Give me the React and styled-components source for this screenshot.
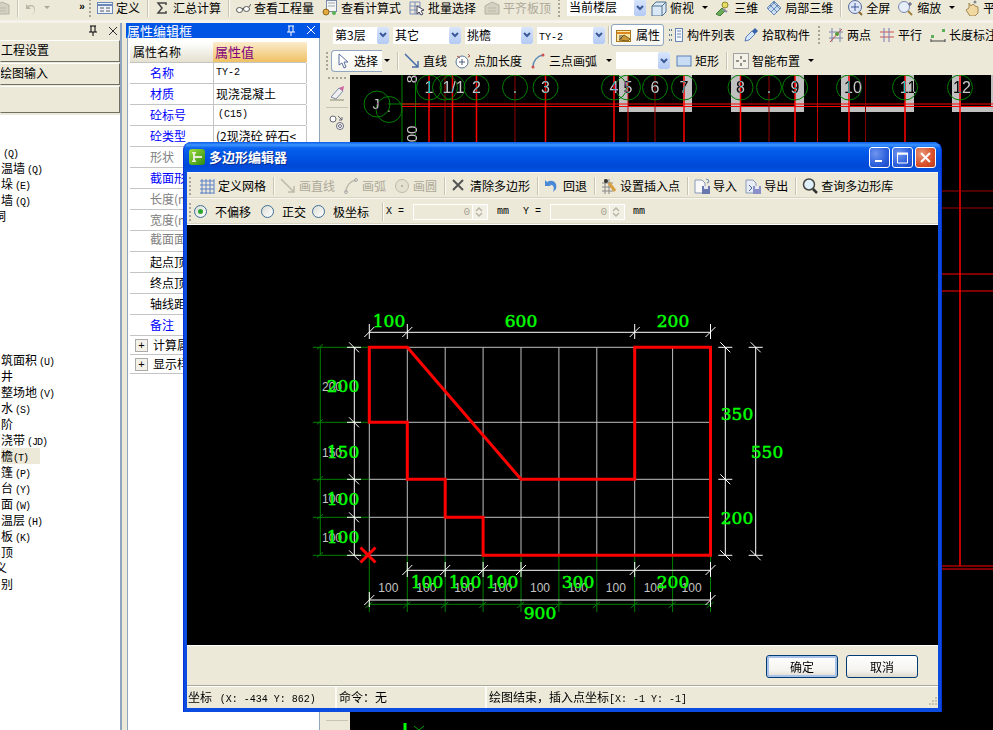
import React from "react";
import styled, { createGlobalStyle } from "styled-components";

const CJK = `"Noto Sans CJK SC", "Liberation Sans", sans-serif`;
const MONO = `"Liberation Mono", "Noto Sans CJK SC", monospace`;
const BEIGE = "#ece9d8";

const GlobalStyle = createGlobalStyle`
  html, body { margin: 0; padding: 0; background: #000; overflow: hidden; }
  body { font: 12px/16px ${CJK}; color: #000; }
`;

/* ---------- icons ---------- */
const SvgBase = styled.svg`
  flex: none;
  display: block;
`;

const Svg = ({ w = 16, h = 16, children }) => (
  <SvgBase width={w} height={h} viewBox={`0 0 ${w} ${h}`}>
    {children}
  </SvgBase>
);

const icons = {
  table: <><rect x=".5" y="2.5" width="15" height="11" fill="#eef3fb" stroke="#6a87b8" /><path d="M1 5h14" stroke="#6a87b8" strokeWidth="2" /><path d="M3 8h4M3 11h4M9 8h4M9 11h4" stroke="#555" /></>,
  sigma: <path d="M4 3h8v2M12 3H4l4 5-4 5h8v-2" fill="none" stroke="#444" strokeWidth="1.5" />,
  glasses: <><ellipse cx="4.5" cy="10" rx="3" ry="2.5" fill="#fff" stroke="#555" /><ellipse cx="11.5" cy="9" rx="3" ry="2.5" fill="#fff" stroke="#555" /><path d="M7 9l2-1M14 7l2-3" stroke="#555" /></>,
  calc: <><rect x="4.5" y=".5" width="10" height="11" fill="#f6f6f6" stroke="#7a8aa8" /><path d="M6 3h7M6 6h7" stroke="#9aa" /><circle cx="4" cy="12" r="3" fill="#e3a93a" stroke="#8a6a20" /><circle cx="12" cy="13" r="2" fill="#58b058" /></>,
  batch: <><path d="M1 2h10M1 6h10M1 10h10M1 14h10M1 2v12M6 2v12M11 2v12" fill="none" stroke="#7a8fb8" /><path d="M8 6l7 4-3 1 2 3-2 1-2-3-2 2z" fill="#fff" stroke="#445" /></>,
  align: <><path d="M1 6l7-4 7 3v9H1z" fill="#d4d1c2" stroke="#b5b2a2" /><path d="M4 8h8M4 11h8" stroke="#bdb9a8" /></>,
  cube: <><path d="M1 6l4-4h10v10l-4 4H1z" fill="#dbe9f6" stroke="#50708c" /><path d="M1 6h10v10M11 6l4-4" fill="none" stroke="#50708c" /></>,
  three: <><circle cx="10" cy="5" r="3" fill="#e8dc60" stroke="#8a8a30" /><path d="M1 14l6-6 3 3-5 5z" fill="#6cab5a" stroke="#3f7a3a" /><path d="M8 9l4 3" stroke="#8a8aa0" strokeWidth="2" /></>,
  part3d: <><path d="M1 8l7-7 7 7-7 7z" fill="#c9dcf2" stroke="#6a8ab8" /><path d="M4 5l7 7M7 2l7 7M12 5l-7 7M9 2L2 9" stroke="#6a8ab8" /></>,
  zoomAll: <><circle cx="8" cy="7" r="6.5" fill="#dce6f6" stroke="#5a6c96" /><path d="M8 3v8M4 7h8" stroke="#3a5a9a" /><path d="M12 12l3 3" stroke="#8a6a30" strokeWidth="2" /></>,
  zoomDrag: <><circle cx="6" cy="7" r="5.5" fill="#e6eefa" stroke="#7a8ab0" /><path d="M10 11l4 4" stroke="#a08040" strokeWidth="2" /><path d="M12 2v4M10 4h4" stroke="#557" /></>,
  hand: <><path d="M2 10l3-2V3l2 3 2-2 2 2 3 1v6l-3 3H6z" fill="#f0d8a0" stroke="#a08850" /><circle cx="11" cy="2" r="1.5" fill="#888" /></>,
  attr: <><rect x=".5" y="3.5" width="14" height="11" fill="#fbe8a8" stroke="#a87820" /><path d="M1 6h13" stroke="#e08820" strokeWidth="2" /><path d="M3 13l5-5 6 4-2 2z" fill="#c89838" stroke="#7a5a18" /><path d="M3 9h4M3 11h3" stroke="#444" /></>,
  list: <><path d="M1 3h3M1 8h3M1 13h3" stroke="#5a7a9a" strokeWidth="2" strokeDasharray="1 1" /><rect x="7.5" y="1.5" width="7" height="13" fill="#f4f7fb" stroke="#6a87b8" /><path d="M9 4h4M9 7h4M9 10h4" stroke="#6a87b8" /></>,
  dropper: <><path d="M2 14l1-4 6-6 3 3-6 6z" fill="#d4e6fa" stroke="#5a7ab8" /><path d="M9 4l3-3 3 3-3 3z" fill="#3a62aa" /></>,
  twoPt: <><path d="M4 1v14M12 1v14M1 5h14M1 11h14" stroke="#7a8ab0" /><path d="M2 15L14 2" stroke="#c05050" /><circle cx="9" cy="7" r="2" fill="#5a9a3a" /></>,
  parallel: <><path d="M1 5h14M1 10h14" stroke="#d05050" /><path d="M5 1v14M10 1v14" stroke="#7a7ab8" /></>,
  dim: <><rect x="1" y="8" width="3" height="3" fill="#5ab05a" /><rect x="12" y="2" width="3" height="3" fill="#5ab05a" /><path d="M1 12v3M15 12v3M1 14h14" stroke="#444" /></>,
  cursor: <path d="M3 1l0 11 3-2 2 5 2-1-2-5h4z" fill="#fff" stroke="#5a6ea0" />,
  line: <path d="M1 1l13 13M14 8v6H8" fill="none" stroke="#4a6ea8" strokeWidth="1.5" />,
  pointLen: <><circle cx="7" cy="9" r="6" fill="#fff" stroke="#5a7a9a" /><path d="M7 6v6M4 9h6" stroke="#4a5a7a" /><path d="M2 3l3 2M13 1l2 2-2 1" fill="none" stroke="#b05040" /></>,
  arc: <><path d="M3 14C3 8 7 3 13 2" fill="none" stroke="#5a8ab8" strokeWidth="1.5" /><circle cx="3" cy="14" r="1.5" fill="#d05050" /><circle cx="13" cy="2" r="1.5" fill="#d05050" /></>,
  rect: <rect x="1" y="3" width="14" height="10" fill="#c8dcf4" stroke="#5a80b8" />,
  smart: <><rect x=".5" y=".5" width="15" height="15" fill="#f4f2e6" stroke="#556" strokeDasharray="1 1" /><path d="M8 3v3M8 10v3M3 8h3M10 8h3" stroke="#333" /></>,
  eraser: <><path d="M2 12l8-9 4 3-7 8z" fill="#f0f0f0" stroke="#7a8aa8" /><path d="M10 3l4 3 1-5z" fill="#d060a0" /><path d="M1 15h14" stroke="#8a8a70" /></>,
  circles: <><circle cx="4" cy="5" r="3" fill="#fff" stroke="#667" /><circle cx="11" cy="12" r="3.5" fill="#fff" stroke="#667" /><circle cx="11" cy="12" r="1.5" fill="none" stroke="#667" /><path d="M9 2l4 4M13 3v3h-3" fill="none" stroke="#667" /></>,
  grid: <path d="M1 3h14M1 7h14M1 11h14M1 15h14M3 1v15M7 1v15M11 1v15M15 1v15" stroke="#5b80c8" />,
  grayLine: <path d="M1 1l13 13M14 8v6H8" fill="none" stroke="#bdbaab" strokeWidth="1.5" />,
  grayArc: <><path d="M3 14C3 8 7 3 13 2" fill="none" stroke="#bdbaab" strokeWidth="1.5" /><circle cx="3" cy="14" r="1.5" fill="none" stroke="#aaa" /><circle cx="13" cy="2" r="1.5" fill="none" stroke="#aaa" /></>,
  grayCircle: <><circle cx="8" cy="8" r="6.5" fill="#e4e1d0" stroke="#bdbaab" /><circle cx="8" cy="8" r="1" fill="#a8a596" /></>,
  clear: <path d="M2 2l10 10M12 2L2 12" stroke="#555" strokeWidth="2" />,
  undo: <><path d="M3 4c5-3 11 0 9 7l-3 3c2-5 0-8-4-7z" fill="#4a88d8" /><path d="M1 2v6h6z" fill="#4a88d8" /></>,
  insert: <><path d="M1 5h11M1 9h11M1 13h11M4 1v15M8 1v15" stroke="#888" /><path d="M8 5l6 8" stroke="#d8a040" strokeWidth="3" /><circle cx="5" cy="3" r="2" fill="#333" /></>,
  imp: <><path d="M1 2h7l3 3v10H1z" fill="#f8f8f8" stroke="#8a9ab8" /><rect x="8" y="8" width="8" height="8" fill="#6a78b0" /><rect x="10" y="8" width="4" height="3" fill="#e8e8f0" /><path d="M12 1a3 3 0 0 1 3 3l-2 1" fill="none" stroke="#6a88b0" /></>,
  exp: <><path d="M1 2h7l3 3v10H1z" fill="#e8ecf4" stroke="#8a9ab8" /><rect x="8" y="8" width="8" height="8" fill="#8a90c8" /><rect x="10" y="8" width="4" height="3" fill="#e8e8f0" /><path d="M4 7l3 3-3 3" fill="none" stroke="#4a6a98" /></>,
  search: <><circle cx="7" cy="6.5" r="5.5" fill="#dff0fa" stroke="#444" strokeWidth="1.5" /><path d="M11 11l4 4" stroke="#333" strokeWidth="2.5" /></>,
};

const Icon = ({ name }) => <Svg>{icons[name]}</Svg>;

/* ---------- shared bar parts ---------- */
const Page = styled.div`
  position: relative;
  width: 993px;
  height: 730px;
  overflow: hidden;
  display: flex;
  flex-direction: column;
  background: ${BEIGE};
`;

const Bar = styled.div`
  display: flex;
  align-items: center;
  flex: none;
  height: ${(p) => p.$h || 24}px;
  padding-left: ${(p) => p.$pl || 0}px;
  padding-bottom: ${(p) => p.$pb || 0}px;
  background: ${BEIGE};
  box-sizing: border-box;
  white-space: nowrap;
`;

const TopBar = styled(Bar)`
  border-bottom: 1px solid #f6f4ea;
  box-shadow: inset 0 -2px 0 #f4f2e8;
`;

const ToolItem = styled.div`
  display: flex;
  align-items: center;
  flex: none;
  gap: 3px;
  padding: 0 4px;
  margin-left: ${(p) => p.$ml || 0}px;
  color: ${(p) => (p.$off ? "#aca899" : "#000")};
`;

const Tool = ({ icon, label, off }) => (
  <ToolItem $off={off}>
    <Icon name={icon} />
    <span>{label}</span>
  </ToolItem>
);

const Sep = styled.i`
  flex: none;
  width: 1px;
  height: 18px;
  margin: 0 ${(p) => p.$mr ?? 2}px 0 ${(p) => p.$ml ?? 3}px;
  background: #c8c4b0;
  box-shadow: 1px 0 0 #fbfaf4;
`;

const Grip = styled.i`
  flex: none;
  width: 2px;
  height: 18px;
  margin: 0 ${(p) => p.$mr ?? 4}px 0 ${(p) => p.$ml ?? 3}px;
  background: repeating-linear-gradient(to bottom, #a8a594 0 2px, transparent 2px 4px);
`;

const Caret = styled.i`
  flex: none;
  width: 0;
  height: 0;
  margin: 0 ${(p) => p.$mr ?? 3}px 0 ${(p) => p.$ml ?? 4}px;
  border: 3px solid transparent;
  border-top: 3px solid ${(p) => p.$c || "#000"};
  border-bottom: 0;
`;

const ComboBox = styled.div`
  display: flex;
  flex: none;
  justify-content: space-between;
  width: ${(p) => p.$w}px;
  height: 17px;
  margin-right: ${(p) => p.$mr ?? 4}px;
  background: #fff;
  line-height: 16px;
  padding-left: 2px;
  box-sizing: border-box;
`;

const ComboArrow = styled.div`
  display: flex;
  align-items: center;
  justify-content: center;
  width: 12px;
  background: linear-gradient(to bottom, #d8e5fb, #b4caf5);
  border-radius: 2px;
`;

const Combo = ({ w, mr, children }) => (
  <ComboBox $w={w} $mr={mr}>
    <span>{children}</span>
    <ComboArrow>
      <Svg w={8} h={6}>
        <path d="M1 1l3 3 3-3" fill="none" stroke="#3a5a9a" strokeWidth="2" />
      </Svg>
    </ComboArrow>
  </ComboBox>
);

const Latin = styled.span`
  font: ${(p) => (p.$bold ? "bold " : "")}10px/16px ${MONO};
  margin-left: ${(p) => p.$ml ?? 0}px;
  letter-spacing: ${(p) => p.$ls ?? 0}px;
`;

const PushButton = styled.div`
  display: flex;
  align-items: center;
  flex: none;
  gap: 4px;
  height: 22px;
  padding: 0 3px 0 4px;
  box-sizing: border-box;
  border: 1px solid #8fa5c0;
  border-radius: 3px;
  background: linear-gradient(to bottom, #fff, #f6f5ee);
`;

const SelectButton = styled(PushButton)`
  width: 51px;
  gap: 2px;
  padding-left: 4px;
  border-right: 0;
  border-radius: 4px 0 0 4px;
`;

/* ---------- left panel ---------- */
const Main = styled.div`
  display: flex;
  flex: 1;
  min-height: 0;
`;

const LeftPanel = styled.div`
  display: flex;
  flex-direction: column;
  flex: none;
  width: 122px;
  box-sizing: border-box;
  border-right: 2px solid #8fa5bf;
`;

const DockHead = styled.div`
  display: flex;
  align-items: center;
  justify-content: flex-end;
  flex: none;
  gap: 9px;
  height: 15px;
  padding-right: 2px;
  margin-bottom: 2px;
  background: ${BEIGE};
`;

const PropHead = styled(DockHead)`
  justify-content: space-between;
  padding-left: 1px;
  color: #fff;
  font-size: 13px;
  background: #0055e5;
`;

const HeadIcons = styled.span`
  display: flex;
  gap: 9px;
  padding-right: 2px;
`;

const NavButton = styled.div`
  flex: none;
  height: ${(p) => p.$h}px;
  line-height: ${(p) => p.$h - 5}px;
  margin-bottom: 1px;
  box-sizing: border-box;
  border: 1px solid;
  border-color: #fff #716f64 #716f64 transparent;
  background: ${BEIGE};
  text-indent: ${(p) => p.$indent || 0}px;
  overflow: hidden;
`;

const TreeList = styled.div`
  flex: 1;
  padding-top: 29px;
  margin-top: 1px;
  background: #fff;
`;

const TreeRow = styled.div`
  height: 16px;
  line-height: 16px;
  padding-left: 1px;
  white-space: nowrap;
  overflow: hidden;
`;

const TreeText = styled.span`
  display: inline-block;
  padding-right: 12px;
  margin-left: ${(p) => p.$shift || 0}px;
  background: ${(p) => (p.$active ? BEIGE : "transparent")};
`;

const Splitter = styled.div`
  flex: none;
  width: 4px;
  background: ${BEIGE};
`;

/* ---------- property panel ---------- */
const PropPanel = styled.div`
  display: flex;
  flex-direction: column;
  flex: none;
  width: 194px;
`;

const PropBody = styled.div`
  flex: 1;
  margin: -2px 0 0 1px;
  padding: 4px 13px 0 2px;
  background: #fff;
  border: solid #8fa5bf;
  border-width: 0 1px 0 1px;
`;

const PropRow = styled.div`
  display: grid;
  grid-template-columns: 83px 94px;
  height: ${(p) => p.$h || 21}px;
  box-sizing: border-box;
  border-bottom: 1px solid #c4c4c4;
`;

const NameCell = styled.div`
  display: flex;
  align-items: ${(p) => (p.$top ? "flex-start" : "center")};
  gap: 5px;
  padding-left: ${(p) => (p.$plain ? 3 : 20)}px;
  color: ${(p) => p.$c || "#000"};
  overflow: hidden;
  white-space: nowrap;
`;

const ValueCell = styled.div`
  display: flex;
  align-items: center;
  padding-left: 2px;
  border: solid #c4c4c4;
  border-width: 0 1px 0 1px;
  overflow: hidden;
  white-space: nowrap;
`;

const HeadName = styled(NameCell)`
  background: linear-gradient(to bottom, #fff, #e4e0d0);
`;

const HeadValue = styled(ValueCell)`
  color: #800080;
  font-size: 13px;
  border: 0;
  background: linear-gradient(to bottom, #fbeccd, #f0c164);
`;

const PlusBox = styled.i`
  display: flex;
  align-items: center;
  justify-content: center;
  flex: none;
  width: 11px;
  height: 11px;
  margin-left: 2px;
  border: 1px solid #aaa;
  background: #f4f2e8;
  font: 11px/11px "Liberation Sans", sans-serif;
  color: #000;
`;

const props = [
  ["名称", "#0000ff", <Latin>TY-2</Latin>],
  ["材质", "#0000ff", "现浇混凝土"],
  ["砼标号", "#0000ff", <Latin $ml={2}>(C15)</Latin>],
  ["砼类型", "#0000ff", "(2现浇砼 碎石<"],
  ["形状", "#808080", ""],
  ["截面形状", "#0000ff", ""],
  ["长度(m)", "#808080", ""],
  ["宽度(m)", "#808080", ""],
  ["截面面积", "#808080", ""],
  ["起点顶标高", "#000", ""],
  ["终点顶标高", "#000", ""],
  ["轴线距边线", "#000", ""],
  ["备注", "#0000ff", ""],
];

/* ---------- right area ---------- */
const RightArea = styled.div`
  display: flex;
  flex-direction: column;
  flex: 1;
  min-width: 0;
  margin-left: 3px;
`;

const SideBody = styled.div`
  display: flex;
  flex: 1;
  min-height: 0;
  margin-top: 1px;
`;

const VBar = styled.div`
  display: flex;
  flex-direction: column;
  align-items: center;
  flex: none;
  gap: 6px;
  width: 27px;
  padding-top: 2px;
  background: ${BEIGE};
  box-sizing: border-box;
`;

const VGrip = styled.i`
  flex: none;
  width: 18px;
  height: 2px;
  background: repeating-linear-gradient(to right, #a8a594 0 2px, transparent 2px 4px);
`;

const VSep = styled.i`
  flex: none;
  width: 22px;
  height: 1px;
  background: #c8c4b0;
`;

const VBottom = styled.div`
  display: flex;
  flex-direction: column;
  align-items: center;
  gap: 4px;
  margin-top: auto;
  height: 10px;
`;

const CadView = styled.div`
  flex: 1;
  background: #000;
  min-width: 0;
  svg { display: block; }
`;

/* labels in the plan are XOR-drawn: dark on grey blocks, cyan on red axes */
const XorText = styled.g`
  mix-blend-mode: difference;
`;

/* ---------- dialog ---------- */
const Dialog = styled.div`
  position: absolute;
  left: 184px;
  top: 142px;
  width: 757px;
  height: 570px;
  display: flex;
  flex-direction: column;
  box-sizing: border-box;
  border: solid #0a4be0;
  border-width: 0 3px 4px 3px;
  border-radius: 8px 8px 0 0;
  background: ${BEIGE};
  box-shadow: -1px 0 0 #0831d9, 1px 0 0 #0831d9;
`;

const TitleBar = styled.div`
  display: flex;
  align-items: center;
  flex: none;
  gap: 4px;
  height: 30px;
  margin: 0 -3px;
  padding: 0 5px 0 5px;
  box-sizing: border-box;
  border-radius: 8px 8px 0 0;
  background: linear-gradient(
    to bottom,
    #0a5be8 0,
    #3d95ff 3px,
    #0a62ee 6px,
    #0055e5 14px,
    #0049d8 24px,
    #0451e0 30px
  );
`;

const TitleText = styled.div`
  flex: 1;
  font: bold 13px/16px ${CJK};
  color: #fff;
  text-shadow: 1px 1px 0 #0a2f90;
`;

const CapButton = styled.div`
  display: flex;
  align-items: center;
  justify-content: center;
  flex: none;
  width: 21px;
  height: 21px;
  box-sizing: border-box;
  border: 1px solid #fff;
  border-radius: 3px;
  background: ${(p) =>
    p.$close
      ? "radial-gradient(circle at 30% 30%, #e89878, #d84f28 60%, #c03a18)"
      : "radial-gradient(circle at 30% 30%, #6f96ee, #2c5fdc 60%, #1c46c0)"};
`;

const CapGroup = styled.div`
  display: flex;
  gap: 2px;
`;

const DialogBar = styled(Bar)`
  height: 26px;
  padding-left: 2px;
  box-shadow: inset 0 -1px 0 #d8d4c2;
  border-top: 1px solid #f8f7ef;
`;

const RadioItem = styled.label`
  display: flex;
  align-items: center;
  flex: none;
  gap: 8px;
  margin-right: ${(p) => p.$mr}px;
`;

const RadioDot = styled.i`
  display: flex;
  align-items: center;
  justify-content: center;
  flex: none;
  width: 13px;
  height: 13px;
  box-sizing: border-box;
  border: 1px solid #3f6f98;
  border-radius: 50%;
  background: linear-gradient(135deg, #dcdcd4, #fff);
  &::after {
    content: "";
    display: ${(p) => (p.$on ? "block" : "none")};
    width: 5px;
    height: 5px;
    border-radius: 50%;
    background: #2fa62f;
  }
`;

const Radio = ({ on, label, mr = 10 }) => (
  <RadioItem $mr={mr}>
    <RadioDot $on={on} />
    <span>{label}</span>
  </RadioItem>
);

const FieldLabel = styled.span`
  flex: none;
  font: 10px/16px ${MONO};
  width: ${(p) => p.$w}px;
`;

const Field = styled.div`
  display: flex;
  align-items: center;
  justify-content: flex-end;
  flex: none;
  width: 75px;
  height: 16px;
  margin-right: ${(p) => p.$mr}px;
  box-sizing: border-box;
  border: 1px solid #fff;
  color: #a8a596;
  font: 11px/14px "Liberation Mono", monospace;
`;

const Spin = styled.i`
  display: block;
  flex: none;
  width: 14px;
  height: 14px;
  margin-left: 2px;
  background: #f2f0e4;
  border-left: 1px solid #fff;
`;

const NumField = ({ mr }) => (
  <Field $mr={mr}>
    0
    <Spin>
      <Svg w={13} h={14}>
        <path d="M3 6l3-3 3 3M3 8l3 3 3-3" fill="none" stroke="#b8b5a6" strokeWidth="1.5" />
      </Svg>
    </Spin>
  </Field>
);

const DrawArea = styled.div`
  flex: none;
  height: 420px;
  background: #000;
  border-top: 1px solid #fff;
  border-bottom: 1px solid #fff;
  svg { display: block; }
`;

const ButtonRow = styled.div`
  display: flex;
  justify-content: flex-end;
  gap: 8px;
  flex: none;
  height: 40px;
  padding: 9px 20px 0 0;
  box-sizing: border-box;
  border-bottom: 1px solid #aca899;
`;

const DlgButton = styled.div`
  flex: none;
  width: 72px;
  height: 23px;
  line-height: 21px;
  text-align: center;
  box-sizing: border-box;
  border: 1px solid #003c74;
  border-radius: 3px;
  background: linear-gradient(to bottom, #fff, #f4f3ee 70%, #dcd8cc);
  box-shadow: ${(p) => (p.$def ? "inset 0 0 0 2px #a9c2ea" : "none")};
`;

const StatusBar = styled.div`
  position: relative;
  display: flex;
  flex: 1;
  border-top: 1px solid #fff;
  line-height: 19px;
`;

const StatusCell = styled.div`
  flex: none;
  width: ${(p) => p.$w}px;
  padding-left: ${(p) => p.$pl ?? 2}px;
  box-sizing: border-box;
  border-right: ${(p) => (p.$end ? "0" : "2px solid #fbfaf4")};
  white-space: nowrap;
`;

const ResizeGrip = styled.div`
  position: absolute;
  right: 0;
  bottom: 1px;
`;

/* ---------- background plan ---------- */
const axes = [
  ["1", 429, "#ff0000"], ["", 445, "#a00000"], ["1/1", 452.5, "#ff0000"], ["2", 476.5, "#ff0000"],
  [".", 515, "#900000"], ["3", 545.5, "#ff0000"], ["4", 614, "#ff0000"], ["5", 628, "#d00000"],
  ["6", 655, "#a00000"], ["7", 684, "#ff0000"], ["8", 740.5, "#ff0000"], [".", 769, "#900000"],
  ["9", 795, "#ff0000"], ["10", 849, "#ff0000"], ["11", 905, "#ff0000"], ["12", 960, "#ff0000"],
];
const plainLines = [[817.5, "#c00000"], [865.5, "#800000"]];

const labelShift = { "1/1": 1, 10: 4, 11: 3, 12: 2 };

const blocks = [
  [619, 692],
  [731, 804],
  [841, 914],
  [952, 1000],
];

const BackPlan = () => (
  <svg width="643" height="656" viewBox="350 74 643 656">
    {blocks.map(([a, b]) => (
      <path key={a} d={`M${a} 74h9v32h${b - a - 18}V74h9v37h-${b - a}z`} fill="#c0c0c0" />
    ))}
    <path d="M402 74v68M415.5 74v68M388 103h32" stroke="#008000" fill="none" />
    <path d="M402 103h591M402 105.5h591" stroke="#ff0000" fill="none" />
    {axes.map(([, x, c]) => (
      <path key={x} d={`M${x} 74V565`} stroke={c} strokeWidth={c === "#ff0000" ? 1.5 : 1} />
    ))}
    {plainLines.map(([x, c]) => (
      <path key={x} d={`M${x} 74V142`} stroke={c} />
    ))}
    <g fill="none" stroke="#008000">
      {axes.map(([, x]) => <circle key={x} cx={x} cy="86.5" r="12.5" />)}
      <circle cx="377" cy="103" r="13" />
      <circle cx="389" cy="108.5" r="13" />
    </g>
    <XorText fill="#c8c8c8" fontFamily="Liberation Sans, sans-serif" fontSize="16" textAnchor="middle">
      {axes.map(([l, x]) => (l ? <text key={x} x={x + (labelShift[l] || 0)} y="92">{l}</text> : null))}
      <text x="376" y="108" fontSize="14">J</text>
      <text x="389" y="111" fontSize="12">.</text>
      <text transform="translate(417 78) rotate(-90)" fontSize="15">8</text>
      <text transform="translate(417 133) rotate(-90)" fontSize="15">00</text>
    </XorText>
    <path d="M941 190h52M941 207h52" stroke="#a00000" />
    <path d="M941 273h52M941 290h52M941 565h52M941 568h52" stroke="#ff0000" />
    <path d="M405 722v8" stroke="#00ff00" strokeWidth="3" />
    <path d="M414 725l5 4 5-4" stroke="#00a000" fill="none" />
  </svg>
);

/* ---------- polygon drawing ---------- */
const gx = [369.3, 407.3, 445.2, 483.1, 521, 558.9, 596.8, 634.7, 672.6, 710.5];
const gy = [347.3, 422.3, 479.3, 517.3, 555.3];

const poly =
  "369.3,347.3 407.3,347.3 521,479.3 634.7,479.3 634.7,347.3 710.5,347.3 710.5,555.3 483.1,555.3 483.1,517.3 445.2,517.3 445.2,479.3 407.3,479.3 407.3,422.3 369.3,422.3";

const bigLabels = [
  ["100", 389, 327], ["600", 521, 327], ["200", 673, 327],
  ["350", 737, 420], ["200", 737, 524], ["550", 767, 458],
  ["200", 343, 392], ["150", 343, 458], ["100", 343, 505], ["100", 343, 543],
  ["100", 427, 588], ["100", 465, 588], ["100", 502, 588], ["300", 578, 588], ["200", 673, 588],
  ["900", 540, 619],
];

const smallLabels = [
  ["200", 332, 391], ["150", 332, 457], ["100", 332, 503], ["100", 332, 542],
  ...gx.slice(0, 9).map((x) => ["100", x + 19, 592]),
];

const tickH = (x, y) => `M${x} ${y - 8}V${y + 7}M${x - 5} ${y + 5}L${x + 5} ${y - 5}`;
const tickV = (x, y, half = 7) => `M${x - half} ${y}H${x + half}M${x - 5} ${y - 5}L${x + 5} ${y + 5}`;

const PolygonDrawing = () => (
  <svg width="751" height="420" viewBox="187 225 751 420">
    <g stroke="#c0c0c0" fill="none">
      {gx.map((x) => <path key={x} d={`M${x} ${gy[0]}V${gy[4]}`} />)}
      {gy.map((y) => <path key={y} d={`M${gx[0]} ${y}H${gx[9]}`} />)}
    </g>
    <g stroke="#008000" fill="none">
      <path d="M320.3 347.3V555.3M369.3 604.3H710.5" />
      {gy.map((y) => <path key={y} d={`M313 ${y}H369M317 ${y + 2}l6 -5`} />)}
      {gx.map((x) => <path key={x} d={`M${x} 556V612M${x - 4} 608l7 -6`} />)}
    </g>
    <g stroke="#fff" fill="none">
      <path d="M369.3 332.3H710.5" />
      {[gx[0], gx[1], gx[7], gx[9]].map((x) => <path key={x} d={tickH(x, 332)} />)}
      <path d="M725.3 347.3V555.3M755.7 347.3V555.3" />
      {[gy[0], gy[2], gy[4]].map((y) => <path key={y} d={tickV(725.3, y)} />)}
      {[gy[0], gy[4]].map((y) => <path key={y} d={tickV(755.7, y)} />)}
      <path d="M354.3 347.3V555.3" />
      {gy.map((y) => <path key={y} d={tickV(354, y)} />)}
      <path d="M407.3 570.3H710.5M369.3 600H710.5" />
      {[gx[1], gx[2], gx[3], gx[4], gx[7], gx[9]].map((x) => <path key={x} d={tickH(x, 570)} />)}
      {[gx[0], gx[9]].map((x) => <path key={x} d={tickH(x, 600)} />)}
    </g>
    <polygon points={poly} fill="none" stroke="#ff0000" strokeWidth="3" strokeLinejoin="miter" />
    <path d="M360.5 547.5l15 15M375.5 547.5l-15 15" stroke="#ff0000" strokeWidth="3" />
    <g fill="#c4c4c4" fontFamily="Liberation Sans, sans-serif" fontSize="12" textAnchor="middle">
      {smallLabels.map(([t, x, y]) => <text key={`${x}-${y}`} x={x} y={y}>{t}</text>)}
    </g>
    <g fill="#00ff00" fontFamily="DejaVu Serif, serif" fontSize="17" textAnchor="middle" stroke="#00ff00" strokeWidth=".5">
      {bigLabels.map(([t, x, y]) => <text key={`${x}-${y}`} x={x} y={y}>{t}</text>)}
    </g>
  </svg>
);

/* ---------- tree data ---------- */
const tree = [
  [" ", "(Q)", 0, 2], ["温墙", "(Q)"], ["垛", "(E)"], ["墙", "(Q)"], ["洞", "", -7],
  [""], [""], [""], [""], [""], [""], [""], [""],
  ["筑面积", "(U)"], ["井", ""], ["整场地", "(V)"], ["水", "(S)"], ["阶", ""],
  ["浇带", "(JD)"], ["檐", "(T)", 0, 0, true], ["篷", "(P)"], ["台", "(Y)"], ["面", "(W)"],
  ["温层", "(H)"], ["板", "(K)"], ["顶", ""], ["义", "", -6], ["别", ""],
];

const App = () => (
  <Page>
    <GlobalStyle />
    <TopBar $h={23} $pb={7}>
      <ToolItem $ml={-10} $off>
        <Icon name="align" />
      </ToolItem>
      <Sep />
      <ToolItem $off>
        <Svg w={12} h={14}>
          <path d="M2 3v5h5L5 6c3-2 6 0 5 5l-2 3c4-3 4-10-1-10-1 0-2 0-3 1z" fill="#b8b5a6" />
        </Svg>
      </ToolItem>
      <Caret $c="#aca899" $mr={5} />
      <Latin $ml={24} $bold>»</Latin>
      <Grip $ml={4} $mr={2} />
      <Tool icon="table" label="定义" />
      <Sep />
      <Tool icon="sigma" label="汇总计算" />
      <Sep />
      <Tool icon="glasses" label="查看工程量" />
      <Tool icon="calc" label="查看计算式" />
      <Tool icon="batch" label="批量选择" />
      <Tool icon="align" label="平齐板顶" off />
      <Grip $mr={7} />
      <Combo w={79} mr={1}>当前楼层</Combo>
      <Tool icon="cube" label="俯视" />
      <Caret />
      <Tool icon="three" label="三维" />
      <Tool icon="part3d" label="局部三维" />
      <Sep />
      <Tool icon="zoomAll" label="全屏" />
      <Tool icon="zoomDrag" label="缩放" />
      <Caret $mr={5} />
      <Tool icon="hand" label="平移" />
    </TopBar>
    <Main>
      <LeftPanel>
        <DockHead>
          <Svg w={12} h={12}><path d="M3 1h6M4 1v6M8 1v6M2 7h8M6 7v4" stroke="#000" fill="none" /></Svg>
          <Svg w={10} h={10}><path d="M1 1l8 8M9 1L1 9" stroke="#333" /></Svg>
        </DockHead>
        <NavButton $h={22}>工程设置</NavButton>
        <NavButton $h={22} $indent={-1}>绘图输入</NavButton>
        <NavButton $h={27} />
        <TreeList>
          {tree.map(([t, l, shift, pad, active], i) => (
            <TreeRow key={i}>
              {t ? (
                <TreeText $active={active} $shift={shift}>
                  {t.trim()}
                  {l ? <Latin $ml={pad ?? 2} $ls={-1}>{l}</Latin> : null}
                </TreeText>
              ) : null}
            </TreeRow>
          ))}
        </TreeList>
      </LeftPanel>
      <Splitter />
      <PropPanel>
        <PropHead>
          <span>属性编辑框</span>
          <HeadIcons>
            <Svg w={12} h={12}><path d="M3 1h6M4 1v6M8 1v6M2 7h8M6 7v4" stroke="#fff" fill="none" /></Svg>
            <Svg w={10} h={10}><path d="M1 1l8 8M9 1L1 9" stroke="#fff" /></Svg>
          </HeadIcons>
        </PropHead>
        <PropBody>
          <PropRow>
            <HeadName $plain>属性名称</HeadName>
            <HeadValue>属性值</HeadValue>
          </PropRow>
          {props.map(([name, color, value], i) => (
            <PropRow key={name}>
              <NameCell $c={color} $top={i === 8}>{name}</NameCell>
              <ValueCell>{value}</ValueCell>
            </PropRow>
          ))}
          <PropRow $h={19}><NameCell $plain><PlusBox>+</PlusBox>计算属性</NameCell></PropRow>
          <PropRow $h={19}><NameCell $plain><PlusBox>+</PlusBox>显示样式</NameCell></PropRow>
        </PropBody>
      </PropPanel>
      <RightArea>
        <Bar $h={24} $pl={10}>
          <Combo w={56}>第3层</Combo>
          <Combo w={68}>其它</Combo>
          <Combo w={68}>挑檐</Combo>
          <Combo w={68} mr={0}><Latin>TY-2</Latin></Combo>
          <Sep />
          <PushButton>
            <Icon name="attr" />
            <span>属性</span>
          </PushButton>
          <Tool icon="list" label="构件列表" />
          <Tool icon="dropper" label="拾取构件" />
          <Grip $ml={4} $mr={4} />
          <Tool icon="twoPt" label="两点" />
          <Tool icon="parallel" label="平行" />
          <Tool icon="dim" label="长度标注" />
        </Bar>
        <Bar $h={27} $pl={3}>
          <Grip $ml={0} $mr={3} />
          <SelectButton>
            <Icon name="cursor" />
            <span>选择</span>
          </SelectButton>
          <Caret $ml={2} $mr={4} />
          <Sep />
          <Tool icon="line" label="直线" />
          <Tool icon="pointLen" label="点加长度" />
          <Tool icon="arc" label="三点画弧" />
          <Caret $ml={5} $mr={4} />
          <Combo w={54} mr={2}> </Combo>
          <Tool icon="rect" label="矩形" />
          <Sep />
          <Tool icon="smart" label="智能布置" />
          <Caret />
        </Bar>
        <SideBody>
          <VBar>
            <VGrip />
            <Icon name="eraser" />
            <VSep />
            <Icon name="circles" />
            <VBottom>
              <VSep />
            </VBottom>
          </VBar>
          <CadView>
            <BackPlan />
          </CadView>
        </SideBody>
      </RightArea>
    </Main>

    <Dialog>
      <TitleBar>
        <Svg w={16} h={16}>
          <defs>
            <linearGradient id="appIcon" x1="0" y1="0" x2="1" y2="1">
              <stop offset="0" stopColor="#9ade3c" />
              <stop offset="1" stopColor="#2f8a10" />
            </linearGradient>
          </defs>
          <rect width="16" height="16" rx="3" fill="url(#appIcon)" />
          <path d="M3 3h4v1.5H6V7h7v2H6v2.5h1V13H3v-1.5h1v-7H3z" fill="#e4ecd8" />
        </Svg>
        <TitleText>多边形编辑器</TitleText>
        <CapGroup>
          <CapButton>
            <Svg w={13} h={13}><path d="M2 9h7v2H2z" fill="#fff" /></Svg>
          </CapButton>
          <CapButton>
            <Svg w={13} h={13}><path d="M1.5 3h10v9h-10z" fill="none" stroke="#fff" /><path d="M1 2.5h11" stroke="#fff" strokeWidth="2" /></Svg>
          </CapButton>
          <CapButton $close>
            <Svg w={13} h={13}><path d="M2 2l9 9M11 2l-9 9" stroke="#fff" strokeWidth="2" /></Svg>
          </CapButton>
        </CapGroup>
      </TitleBar>
      <DialogBar>
        <Grip $ml={0} $mr={4} />
        <Tool icon="grid" label="定义网格" />
        <Sep />
        <Tool icon="grayLine" label="画直线" off />
        <Tool icon="grayArc" label="画弧" off />
        <Tool icon="grayCircle" label="画圆" off />
        <Sep />
        <Tool icon="clear" label="清除多边形" />
        <Sep />
        <Tool icon="undo" label="回退" />
        <Sep />
        <Tool icon="insert" label="设置插入点" />
        <Sep />
        <Tool icon="imp" label="导入" />
        <Tool icon="exp" label="导出" />
        <Sep />
        <Tool icon="search" label="查询多边形库" />
      </DialogBar>
      <DialogBar>
        <Grip $ml={0} $mr={3} />
        <Radio on label="不偏移" />
        <Radio label="正交" mr={6} />
        <Radio label="极坐标" />
        <Sep $mr={3} />
        <FieldLabel $w={27}>X =</FieldLabel>
        <NumField mr={9} />
        <FieldLabel $w={26}>mm</FieldLabel>
        <FieldLabel $w={27}>Y =</FieldLabel>
        <NumField mr={8} />
        <FieldLabel $w={20}>mm</FieldLabel>
      </DialogBar>
      <DrawArea>
        <PolygonDrawing />
      </DrawArea>
      <ButtonRow>
        <DlgButton $def>确定</DlgButton>
        <DlgButton>取消</DlgButton>
      </ButtonRow>
      <StatusBar>
        <StatusCell $w={150} $pl={1}>
          坐标 <Latin $ml={5}>(X: -434 Y: 862)</Latin>
        </StatusCell>
        <StatusCell $w={150}>命令：无</StatusCell>
        <StatusCell $end $w={400}>
          绘图结束，插入点坐标<Latin>[X: -1 Y: -1]</Latin>
        </StatusCell>
        <ResizeGrip>
          <Svg w={12} h={12}>
            <path d="M9 2h2v2H9zM6 5h2v2H6zM9 5h2v2H9zM3 8h2v2H3zM6 8h2v2H6zM9 8h2v2H9z" fill="#c8c4b0" />
          </Svg>
        </ResizeGrip>
      </StatusBar>
    </Dialog>
  </Page>
);

export default App;
